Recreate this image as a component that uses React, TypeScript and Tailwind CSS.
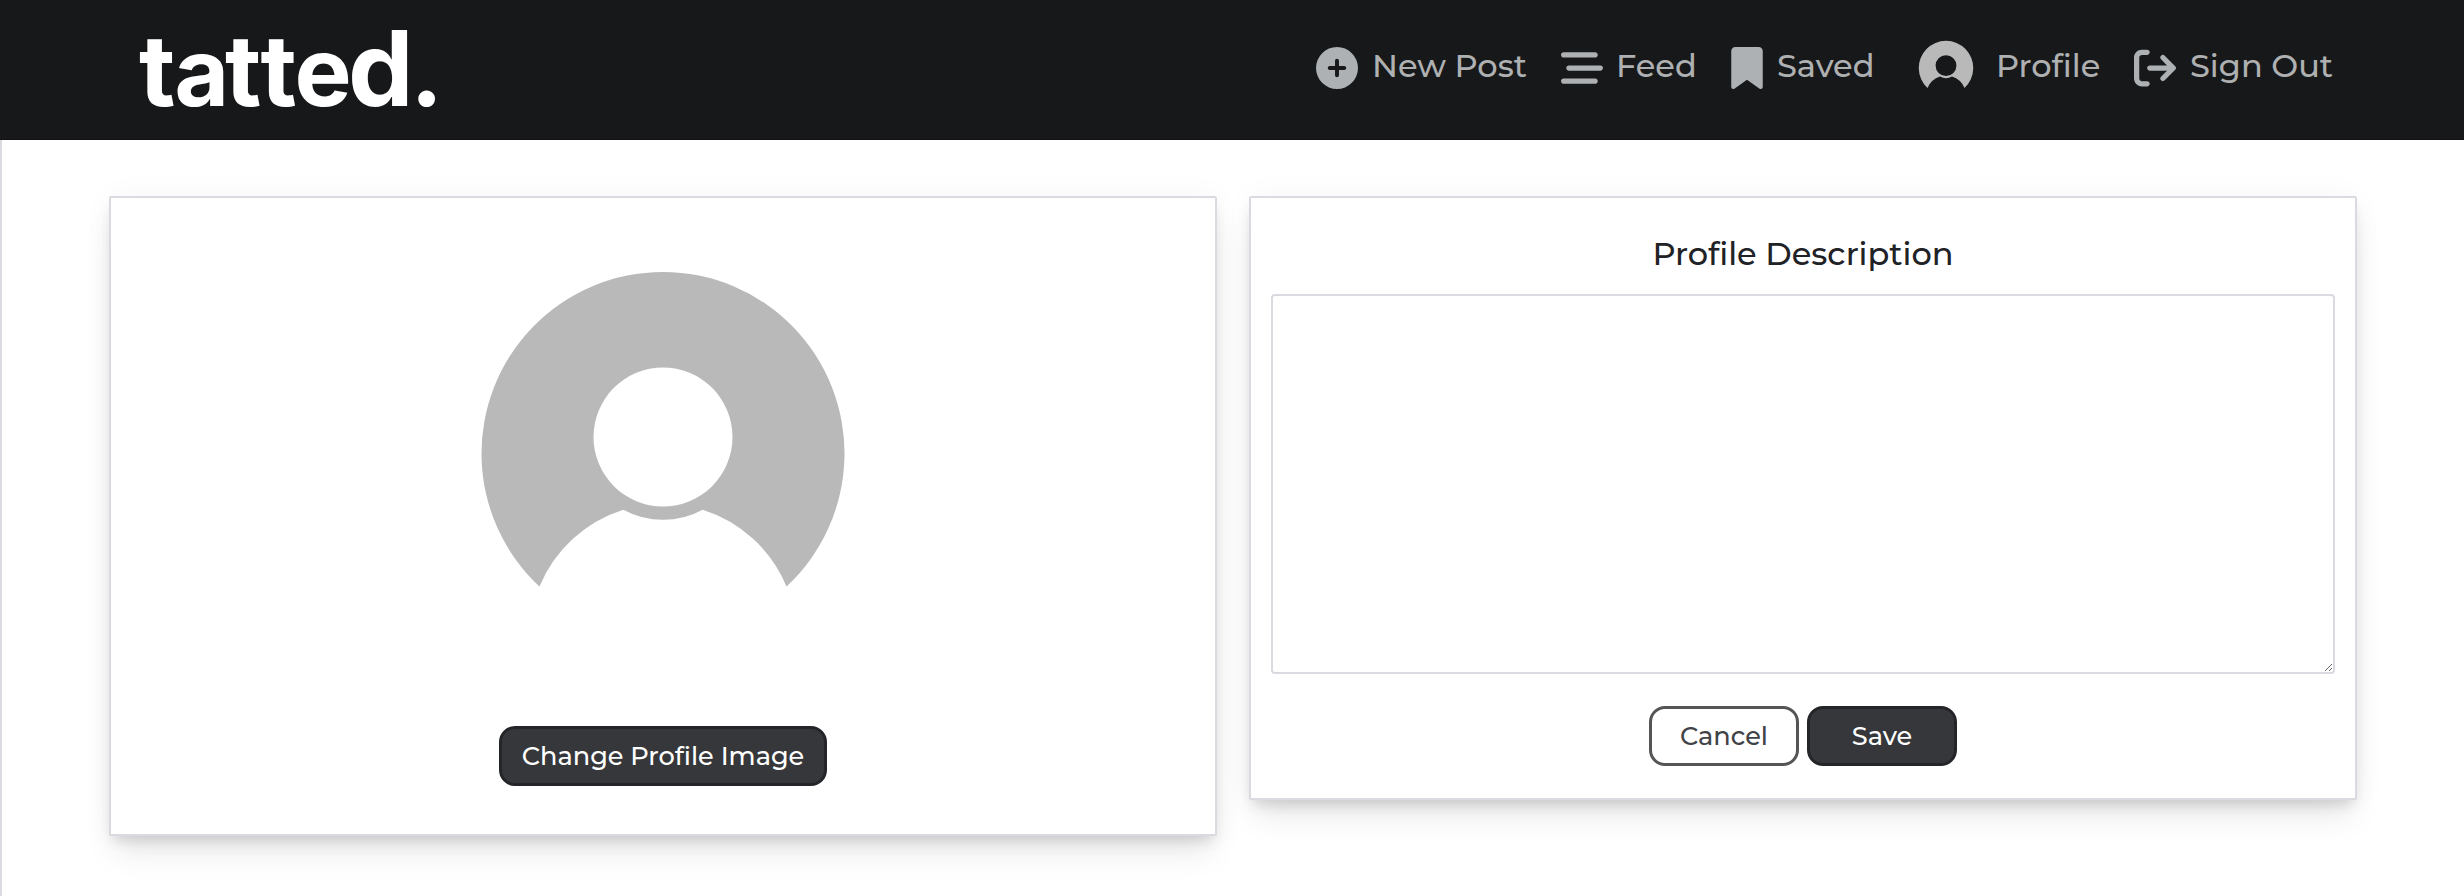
import React from "react";
import { FaArrowRightFromBracket, FaBarsStaggered, FaBookmark, FaCirclePlus } from "react-icons/fa6";

function Avatar({ className }: { className: string }) {
  return (
    <svg viewBox="0 0 400 400" className={className} fill="#b9b9b9" aria-hidden="true">
      <path
        fillRule="evenodd"
        d="M76.5 333.5A181.5 181.5 0 1 1 323.5 333.5A134.5 134.5 0 0 0 239.7 256.7A83 83 0 0 1 160.3 256.7A134.5 134.5 0 0 0 76.5 333.5ZM200 114.5A69.5 69.5 0 1 0 200 253.5A69.5 69.5 0 1 0 200 114.5Z"
      />
    </svg>
  );
}

function Logo() {
  return (
    <svg width="320" height="139" viewBox="0 0 320 139" fill="#fff" className="overflow-visible font-['Inter'] font-bold" aria-label="tatted.">
      <text y="106">
        <tspan x="0" fontSize="99">t</tspan>
        <tspan x="35.5" fontSize="94">a</tspan>
        <tspan x="86" fontSize="99">t</tspan>
        <tspan x="121.5" fontSize="99">t</tspan>
        <tspan x="155.5" fontSize="96">e</tspan>
        <tspan x="209" fontSize="104">d</tspan>
        <tspan x="275.5" fontSize="102" className="font-['Lato'] font-black">.</tspan>
      </text>
    </svg>
  );
}

function NavItem({ icon, label, className }: { icon: React.ReactNode; label: string; className: string }) {
  return (
    <a href="#" className={`flex items-center ${className}`}>
      {icon}
      <span className="-mt-[5px] whitespace-nowrap text-[#aeb0b1]">{label}</span>
    </a>
  );
}

const solid =
  "h-[60px] rounded-[16px] border-[3px] border-[#242529] bg-[#36373b] text-white";
const card =
  "w-[1108px] rounded-[2px] border-2 border-[#dbdae0] bg-white shadow-[0_20px_30px_-6px_rgba(0,0,0,0.10),0_8px_12px_-4px_rgba(0,0,0,0.12),0_0_30px_rgba(0,0,0,0.04)]";

export default function App() {
  return (
    <div className="flex h-[896px] flex-col overflow-hidden bg-white font-['Montserrat','Inter',sans-serif] font-medium text-[#212226]">
      <header className="relative flex h-[140px] shrink-0 items-center justify-between border-b border-[#151013] bg-[#17181a] pr-[128px] pl-[139px]">
        <Logo />
        <nav className="-mt-[3px] flex items-center text-[32px] leading-[48px]">
          <NavItem className="w-[245px] gap-[14px]" label="New Post" icon={<FaCirclePlus className="size-[42px] text-[#adb1b4]" />} />
          <NavItem className="w-[170px] gap-[13px]" label="Feed" icon={<FaBarsStaggered className="size-[42px] text-[#adb1b4]" />} />
          <NavItem className="w-[185px] gap-[14px]" label="Saved" icon={<FaBookmark className="h-[42px] w-[32px] text-[#adb1b4]" />} />
          <NavItem className="w-[218px] gap-[20px]" label="Profile" icon={<Avatar className="size-[60px]" />} />
          <NavItem className="w-[202px] gap-[14px]" label="Sign Out" icon={<FaArrowRightFromBracket className="size-[42px] text-[#adb1b4]" />} />
        </nav>
      </header>
      <main className="flex grow items-start gap-8 border-l-2 border-[#dbdae0] pt-14 pl-[107px]">
        <section className={`flex h-[640px] flex-col items-center pt-[55px] ${card}`}>
          <Avatar className="size-[400px]" />
          <button className={`mt-[73px] w-[328px] text-[25.6px] ${solid}`}>Change Profile Image</button>
        </section>
        <section className={`flex h-[604px] flex-col items-center px-5 pt-8 ${card}`}>
          <h1 className="text-[32px] leading-[48px]">Profile Description</h1>
          <textarea className="mt-4 h-[380px] w-full shrink-0 resize rounded-[4px] border-2 border-[#dbdae0] bg-white" />
          <div className="mt-8 flex gap-2 text-[25.6px]">
            <button className="h-[60px] w-[150px] rounded-[16px] border-[3px] border-[#555555] bg-white text-[#424347]">Cancel</button>
            <button className={`w-[150px] ${solid}`}>Save</button>
          </div>
        </section>
      </main>
    </div>
  );
}
